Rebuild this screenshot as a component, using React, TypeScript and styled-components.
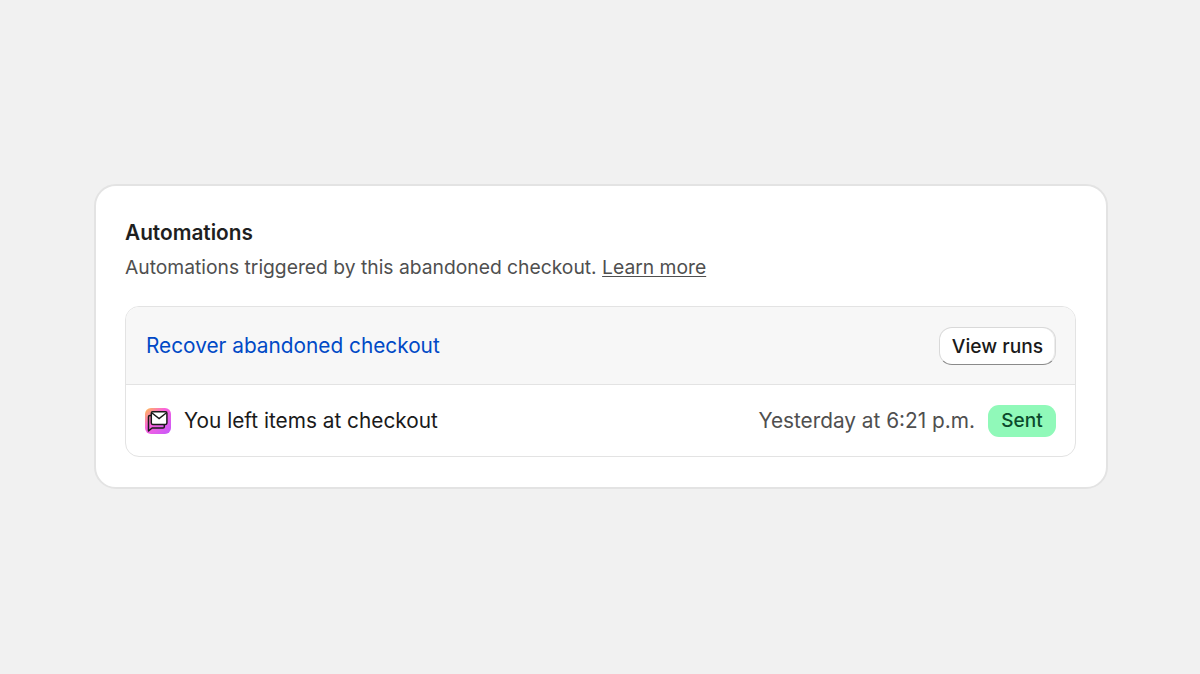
import React from 'react';
import styled, { createGlobalStyle } from 'styled-components';

const GlobalStyle = createGlobalStyle`
  html, body {
    margin: 0;
    padding: 0;
    background: #f1f1f1;
    font-family: Inter, 'Liberation Sans', sans-serif;
  }
`;

const Page = styled.div`
  width: 1200px;
  height: 674px;
  box-sizing: border-box;
  padding-top: 184px;
  padding-left: 94px;
  overflow: hidden;
`;

const Card = styled.section`
  width: 1014px;
  height: 305px;
  box-sizing: border-box;
  padding: 31px 30px 30px 29px;
  background: #fff;
  border: 2px solid #e3e3e3;
  border-radius: 22px;
`;

const Title = styled.h2`
  margin: 0;
  font-size: 20.8px;
  line-height: 32px;
  font-weight: 600;
  color: #1f1f1f;
`;

const Description = styled.p`
  margin: 2px 0 23px;
  font-size: 19.27px;
  line-height: 32px;
  color: #4f4f4f;
`;

const LearnMore = styled.a`
  color: #4f4f4f;
  text-decoration: underline;
  text-underline-offset: 2px;
`;

const Panel = styled.div`
  border: 1px solid #e3e3e3;
  border-radius: 14px;
  overflow: hidden;
  height: 151px;
  box-sizing: border-box;
`;

const PanelHeader = styled.div`
  height: 78px;
  box-sizing: border-box;
  padding: 0 19px 0 20px;
  display: flex;
  align-items: center;
  justify-content: space-between;
  background: #f7f7f7;
  border-bottom: 1px solid #e3e3e3;
`;

const WorkflowLink = styled.a`
  font-size: 20.8px;
  color: #0049c6;
`;

const Button = styled.button`
  width: 117px;
  height: 38px;
  padding: 0;
  font: 500 19.2px Inter, 'Liberation Sans', sans-serif;
  color: #1a1a1a;
  background: #fff;
  border: 1px solid #d9d9d9;
  border-bottom: 1.5px solid #8a8a8a;
  border-radius: 13px;
  box-shadow: inset -1px 0 0 #ececec;
`;

const Row = styled.div`
  height: 71px;
  padding: 0 19px;
  display: flex;
  align-items: center;
  gap: 13px;
`;

const EmailName = styled.span`
  flex: 1;
  font-size: 20.8px;
  color: #1a1a1a;
`;

const Timestamp = styled.span`
  font-size: 20.8px;
  color: #4f4f4f;
`;

const Badge = styled.span`
  width: 68px;
  height: 32px;
  display: flex;
  align-items: center;
  justify-content: center;
  font-size: 19px;
  font-weight: 500;
  color: #0b4a2c;
  background: #90f9b9;
  border-radius: 11px;
`;

const EmailIcon = () => (
  <svg width="26" height="26" viewBox="0 0 26 26" aria-hidden="true">
    <defs>
      <linearGradient id="appGradient" x1="0" y1="0" x2="1" y2="1">
        <stop offset="0" stopColor="#ffc04a" />
        <stop offset="0.4" stopColor="#fb62dc" />
        <stop offset="1" stopColor="#c458fb" />
      </linearGradient>
    </defs>
    <rect width="26" height="26" rx="6" fill="url(#appGradient)" />
    <path d="M6 7.5H4.8a1.3 1.3 0 0 0-1.3 1.3V23l3.6-3H18a1.3 1.3 0 0 0 1.3-1.3V17" fill="none" stroke="#1a1a1a" strokeWidth="1.5" strokeLinejoin="round" />
    <rect x="6.3" y="3.8" width="15.6" height="12.6" rx="1.4" fill="#fff" stroke="#1a1a1a" strokeWidth="1.5" />
    <path d="M7 5l7.1 5.6L21.2 5" fill="none" stroke="#1a1a1a" strokeWidth="1.5" />
  </svg>
);

const App: React.FC = () => (
  <>
    <GlobalStyle />
    <Page>
      <Card>
        <Title>Automations</Title>
        <Description>
          Automations triggered by this abandoned checkout. <LearnMore>Learn more</LearnMore>
        </Description>
        <Panel>
          <PanelHeader>
            <WorkflowLink>Recover abandoned checkout</WorkflowLink>
            <Button>View runs</Button>
          </PanelHeader>
          <Row>
            <EmailIcon />
            <EmailName>You left items at checkout</EmailName>
            <Timestamp>Yesterday at 6:21 p.m.</Timestamp>
            <Badge>Sent</Badge>
          </Row>
        </Panel>
      </Card>
    </Page>
  </>
);

export default App;
